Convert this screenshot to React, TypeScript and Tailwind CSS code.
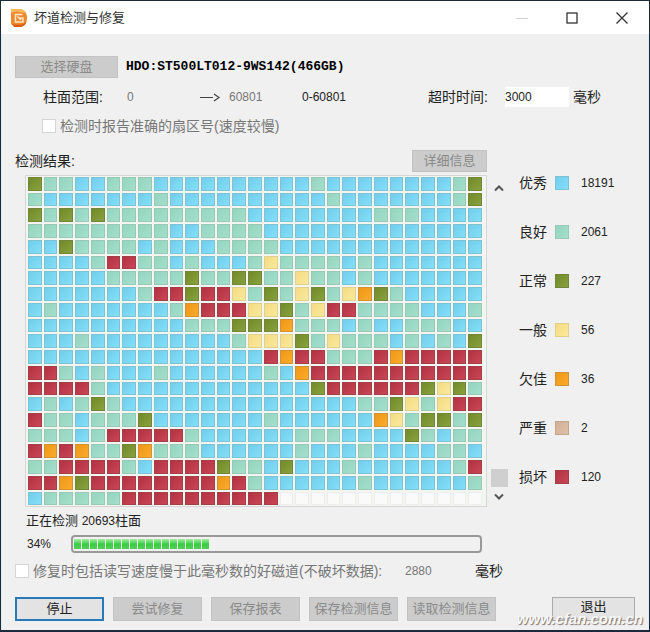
import React from 'react';

type Grade = 'B' | 'L' | 'G' | 'Y' | 'O' | 'T' | 'R' | 'W';

const gradeStyles: Record<Grade, string> = {
    B: 'border-[#7cc3d6] bg-linear-to-br from-[#72cdeb] to-[#84dffa]',
    L: 'border-[#97c9b6] bg-linear-to-br from-[#93d5c0] to-[#a4dfcc]',
    G: 'border-[#728538] bg-linear-to-br from-[#728a29] to-[#88a23e]',
    Y: 'border-[#e0d08e] bg-linear-to-br from-[#f3dc84] to-[#fae89a]',
    O: 'border-[#d09238] bg-linear-to-br from-[#ee9717] to-[#fbab2a]',
    T: 'border-[#c3a58c] bg-linear-to-br from-[#d2b096] to-[#dfc0a8]',
    R: 'border-[#a63e47] bg-linear-to-br from-[#b23243] to-[#c94655]',
    W: 'border-[#eeeeee] bg-[#fafafa]',
};

// One string per row of scanned blocks
const blockRows = [
    'GLLBBLLLBBBBBBBBBBLBBBBBBBBLG',
    'LBBBBBBBLBBBBBBBBBBLBBBBBBBLG',
    'GLGLGLLLLLLLLLBBBBBBBBLLLBBBB',
    'LLLLLLLLLBBLLLLBBBBBBBBBBBBBB',
    'BBGLLLLBLBBBLLLLBBBBBBBBBBBBB',
    'BBBBLRRLLBLBBBLYLLLLBLBBBBBBB',
    'BBBBBLLLLLGLLGGLLYLLBLBBBBBBB',
    'BBBBBBBLRRGRRYLGLYGLYOGLBBBBB',
    'BLBBBBBBBLORRRYYGLYRRLLLLBBBL',
    'BBBBBBBBBBLLLGGGOLLLBLBBLLLBB',
    'BBBLBBBBBBBBBLYYYGLYLLLBLBLBG',
    'BBBBBBBBBBBBBBBRORRLLLRORRRRR',
    'RRLBLBBBLBBBBBBLBORRRRRRRRRRR',
    'RRRRLBBBBBBBBBBBBBGRRRRRRGYGL',
    'BLBLGLBBBBBBBBBBBBBBBLLGYLYRR',
    'RLLBLLLGBBBBBBBLBBBBBBOYLGGLG',
    'LLLBLRRRRRLBBBBBBLLLBBBBGLBLL',
    'ROROLLGOLLLBBBBBBLBBBLBBBBLLB',
    'LLRRRRLBRRRRGLLBGBBBLBBBBBBLR',
    'RROGRRRRRRRRORLBBBBBBLBBBBBBL',
    'BLLLLLRRRRRRRRRRWWWWWWWWWWWWW',
];

const legend: { label: string; grade: Grade; count: number }[] = [
    { label: '优秀', grade: 'B', count: 18191 },
    { label: '良好', grade: 'L', count: 2061 },
    { label: '正常', grade: 'G', count: 227 },
    { label: '一般', grade: 'Y', count: 56 },
    { label: '欠佳', grade: 'O', count: 36 },
    { label: '严重', grade: 'T', count: 2 },
    { label: '损坏', grade: 'R', count: 120 },
];

const Logo = () => (
    <svg viewBox="0 0 18 20" className="h-5 w-[18px]" aria-hidden="true">
        <path d="M1 1h8c5.500 0 8 4 8 9s-2.500 9-8 9H4.500L1 15.500z" fill="#ef8a2c" />
        <path d="M1 1h8c3 0 5.500 1.500 7 4L6 3.500 1 5z" fill="#fbb85a" />
        <path d="M1 15.500 4.500 19H9c4 0 6.500-2 7.500-5L12 16.500H4z" fill="#dc5c12" />
        <path d="M12.500 6.500H5.500v7.500h7.500v-4H9.500M7.500 8.500l3.500 3.500" fill="none" stroke="#fde6c9" strokeWidth="1.500" />
    </svg>
);

const TitleBar = () => (
    <header className="flex h-[33px] items-center bg-white pl-[9px] pr-5 text-[#333]">
        <Logo />
        <h1 className="ml-1.5 flex-1 text-[13px]">坏道检测与修复</h1>
        <div className="flex items-center gap-9">
            <button type="button" aria-label="最小化" disabled className="flex w-3.5 justify-center text-[#d2d2d2]">
                <svg viewBox="0 0 14 14" className="size-3.5"><path d="M1 7.500h12" stroke="currentColor" /></svg>
            </button>
            <button type="button" aria-label="最大化" className="flex w-3.5 justify-center">
                <svg viewBox="0 0 14 14" className="size-3.5"><rect x="2" y="2" width="10" height="10" fill="none" stroke="currentColor" strokeWidth="1.300" /></svg>
            </button>
            <button type="button" aria-label="关闭" className="flex w-3.5 justify-center">
                <svg viewBox="0 0 14 14" className="size-3.5"><path d="M1.500 1.500l11 11M12.500 1.500l-11 11" stroke="currentColor" strokeWidth="1.300" /></svg>
            </button>
        </div>
    </header>
);

const DisabledButton = ({ className, children }: { className: string; children: React.ReactNode }) => (
    <button type="button" disabled className={`whitespace-nowrap border border-[#c3c3c3] bg-[#cccccc] text-[13px] leading-5 text-[#8a8a8a] ${className}`}>
        {children}
    </button>
);

const Chevron = ({ d }: { d: string }) => (
    <svg viewBox="0 0 10 8" className="h-2 w-2.5" aria-hidden="true">
        <path d={d} fill="none" stroke="#555" strokeWidth="2" />
    </svg>
);

const ScanSettings = () => (
    <section>
        <div className="flex items-center gap-2">
            <DisabledButton className="w-[103px]">选择硬盘</DisabledButton>
            <span className="font-['Liberation_Mono','Noto_Sans_CJK_SC',monospace] text-[13px] font-bold text-black">HDO:ST500LT012-9WS142(466GB)</span>
        </div>
        <div className="mt-2 flex h-[22px] items-center pl-7">
            <label htmlFor="from" className="w-[84px] text-sm">柱面范围:</label>
            <input id="from" disabled defaultValue="0" className="w-[72px] text-xs text-[#777]" />
            <span className="flex w-[30px] items-center text-[#444]">
                <svg viewBox="0 0 22 10" className="h-2.5 w-[22px]" aria-hidden="true">
                    <path d="M1 5.500h13M15 2l5 3.500-5 3.500" fill="none" stroke="currentColor" strokeWidth="1.200" />
                </svg>
            </span>
            <input aria-label="结束柱面" disabled defaultValue="60801" className="w-[73px] text-xs text-[#777]" />
            <span className="flex-1 text-xs">0-60801</span>
            <label htmlFor="timeout" className="w-[77px] text-sm">超时时间:</label>
            <input id="timeout" defaultValue="3000" className="h-5 w-16 bg-white text-xs" />
            <span className="w-[66px] pl-1 text-sm">毫秒</span>
        </div>
        <label className="mt-2 flex items-center gap-1 pl-[27px] text-sm leading-5 text-[#777]">
            <input type="checkbox" disabled className="size-3.5 appearance-none border border-[#d5d5d5] bg-white" />
            检测时报告准确的扇区号(速度较慢)
        </label>
    </section>
);

const BlockMap = () => (
    <div className="grid grid-cols-[repeat(29,minmax(0,1fr))] gap-0.5 border border-[#d6d6d6] bg-[#f3f5f1] py-px pl-0.5 pr-1">
        {blockRows.flatMap((row, y) =>
            [...row].map((grade, x) => (
                <div key={`${y}-${x}`} className={`aspect-square border ${gradeStyles[grade as Grade]}`} />
            ))
        )}
    </div>
);

const Results = () => (
    <section className="mt-3.5 flex">
        <div className="min-w-0 flex-1">
            <div className="flex items-center justify-between">
                <h2 className="text-sm leading-5">检测结果:</h2>
                <DisabledButton className="w-[75px]">详细信息</DisabledButton>
            </div>
            <div className="mt-[3px] pl-2.5">
                <BlockMap />
            </div>
        </div>
        <div className="flex w-6 flex-col items-center pb-1 pt-8">
            <button type="button" aria-label="向上滚动" className="flex h-3 items-center">
                <Chevron d="M1 6.500 5 2.500l4 4" />
            </button>
            <div className="mt-auto h-[18px] w-[17px] bg-[#cfcfcf]" />
            <button type="button" aria-label="向下滚动" className="mt-1 flex h-3 items-center">
                <Chevron d="M1 1.500l4 4 4-4" />
            </button>
        </div>
        <ul className="flex w-[124px] flex-col gap-7 pl-2 pt-[22px]">
            {legend.map(({ label, grade, count }) => (
                <li key={label} className="flex h-[21px] items-center">
                    <span className="w-9 text-sm">{label}</span>
                    <span className={`size-3.5 border ${gradeStyles[grade]}`} />
                    <span className="pl-3 text-xs">{count}</span>
                </li>
            ))}
        </ul>
    </section>
);

const Progress = () => (
    <section className="mt-1">
        <p className="pl-[11px] text-[13px] leading-5">
            正在检测 <span className="text-xs">20693</span>柱面
        </p>
        <div className="mt-1 flex items-center pl-3 pr-[153px]">
            <span className="w-11 text-xs">34%</span>
            <div
                role="progressbar"
                aria-label="检测进度"
                aria-valuenow={34}
                aria-valuemin={0}
                aria-valuemax={100}
                className="flex h-[18px] flex-1 gap-px rounded border-2 border-[#999] bg-[#f1f1f1] px-px py-0.5"
            >
                {Array.from({ length: 17 }, (_, i) => (
                    <span key={i} className="w-[7px] bg-linear-to-b from-[#a4eba4] via-[#36cf43] to-[#53cd56]" />
                ))}
            </div>
        </div>
    </section>
);

const Footer = () => (
    <section>
        <div className="mt-2 flex items-center text-[#777]">
            <label className="flex w-[390px] items-center gap-1 whitespace-nowrap text-sm leading-5">
                <input type="checkbox" disabled className="size-3.5 appearance-none border border-[#d5d5d5] bg-white" />
                修复时包括读写速度慢于此毫秒数的好磁道(不破坏数据):
            </label>
            <input aria-label="毫秒数" disabled defaultValue="2880" className="w-[70px] text-xs" />
            <span className="text-sm leading-5 text-[#222]">毫秒</span>
        </div>
        <div className="mt-4 flex items-stretch gap-[9px]">
            <button type="button" className="w-[89px] border-2 border-[#2779b8] bg-[#e3e3e3] text-[13px] leading-5">停止</button>
            <DisabledButton className="w-[89px]">尝试修复</DisabledButton>
            <DisabledButton className="w-[89px]">保存报表</DisabledButton>
            <DisabledButton className="w-[89px]">保存检测信息</DisabledButton>
            <DisabledButton className="w-[89px]">读取检测信息</DisabledButton>
            <div className="relative ml-auto">
                <button type="button" className="flex h-full w-[83px] justify-center border border-[#aaa] bg-[#e3e3e3] pt-0.5 text-[13px] leading-none">退出</button>
                <span className="pointer-events-none absolute -right-2 top-3.5 whitespace-nowrap text-[15px] leading-none font-bold italic text-[#f8f8f8] [text-shadow:1px_1px_1px_#777]">
                    www.cfan.com.cn
                </span>
            </div>
        </div>
    </section>
);

export default function App() {
    return (
        <div className="flex min-h-screen flex-col border border-b-2 border-[#1b2b3b] bg-[#f0f0f0] font-['Liberation_Sans','Noto_Sans_CJK_SC',sans-serif] text-[#222]">
            <TitleBar />
            <main className="flex-1 border-x border-[#d9edf8] px-[13px] pt-[22px]">
                <ScanSettings />
                <Results />
                <Progress />
                <Footer />
            </main>
        </div>
    );
}
